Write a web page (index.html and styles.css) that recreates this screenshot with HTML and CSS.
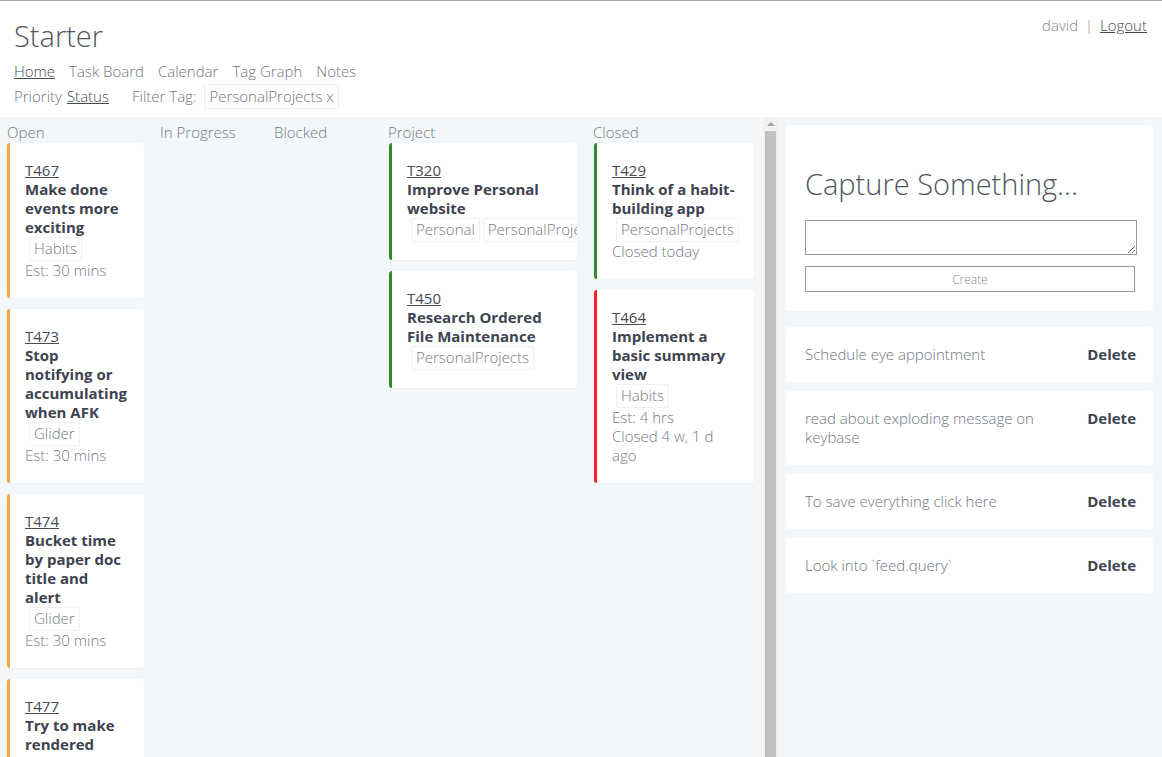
FILE: index.html
```html
<!DOCTYPE html>
<html>
<head>
<meta charset="utf-8">
<title>Starter</title>
<link rel="stylesheet" href="styles.css">
</head>
<body>
<header class="header">
  <div class="header-left">
    <h1 class="brand">Starter</h1>
    <nav class="nav">
      <a class="nav-link active" href="#">Home</a>
      <a class="nav-link" href="#">Task Board</a>
      <a class="nav-link" href="#">Calendar</a>
      <a class="nav-link" href="#">Tag Graph</a>
      <a class="nav-link" href="#">Notes</a>
    </nav>
    <div class="filters">
      <span class="sort">Priority</span>
      <a class="sort active" href="#">Status</a>
      <span class="filter-label">Filter Tag:</span>
      <span class="filter-tag">PersonalProjects x</span>
    </div>
  </div>
  <div class="user">
    <span class="user-name">david</span>
    <span class="sep">|</span>
    <a class="logout" href="#">Logout</a>
  </div>
</header>
<main class="main">
  <section class="board">
    <div class="column col-open">
      <div class="col-title">Open</div>
      <div class="card open">
        <a class="card-id" href="#">T467</a>
        <div class="card-title">Make done events more exciting</div>
        <div class="tags"><span class="tag">Habits</span></div>
        <div class="meta">Est: 30 mins</div>
      </div>
      <div class="card open">
        <a class="card-id" href="#">T473</a>
        <div class="card-title">Stop notifying or accumulating when AFK</div>
        <div class="tags"><span class="tag">Glider</span></div>
        <div class="meta">Est: 30 mins</div>
      </div>
      <div class="card open">
        <a class="card-id" href="#">T474</a>
        <div class="card-title">Bucket time by paper doc title and alert</div>
        <div class="tags"><span class="tag">Glider</span></div>
        <div class="meta">Est: 30 mins</div>
      </div>
      <div class="card open">
        <a class="card-id" href="#">T477</a>
        <div class="card-title">Try to make rendered links clickable</div>
        <div class="tags"><span class="tag">Glider</span></div>
        <div class="meta">Est: 30 mins</div>
      </div>
    </div>
    <div class="column col-progress">
      <div class="col-title">In Progress</div>
    </div>
    <div class="column col-blocked">
      <div class="col-title">Blocked</div>
    </div>
    <div class="column col-project">
      <div class="col-title">Project</div>
      <div class="card project">
        <a class="card-id" href="#">T320</a>
        <div class="card-title">Improve Personal website</div>
        <div class="tags"><span class="tag">Personal</span><span class="tag">PersonalProjects</span></div>
      </div>
      <div class="card project">
        <a class="card-id" href="#">T450</a>
        <div class="card-title">Research Ordered File Maintenance</div>
        <div class="tags"><span class="tag">PersonalProjects</span></div>
      </div>
    </div>
    <div class="column col-closed">
      <div class="col-title">Closed</div>
      <div class="card done">
        <a class="card-id" href="#">T429</a>
        <div class="card-title">Think of a habit-building app</div>
        <div class="tags"><span class="tag">PersonalProjects</span></div>
        <div class="meta">Closed today</div>
      </div>
      <div class="card late">
        <a class="card-id" href="#">T464</a>
        <div class="card-title">Implement a basic summary view</div>
        <div class="tags"><span class="tag">Habits</span></div>
        <div class="meta">Est: 4 hrs</div>
        <div class="meta">Closed 4 w, 1 d ago</div>
      </div>
    </div>
  </section>
  <div class="scrollbar" aria-hidden="true">
    <div class="scroll-up"></div>
    <div class="scroll-thumb"></div>
  </div>
  <aside class="side">
    <div class="capture">
      <h2 class="capture-title">Capture Something...</h2>
      <textarea class="capture-input"></textarea>
      <button class="capture-btn">Create</button>
    </div>
    <div class="note">
      <div class="note-text">Schedule eye appointment</div>
      <a class="note-delete" href="#">Delete</a>
    </div>
    <div class="note">
      <div class="note-text">read about exploding message on keybase</div>
      <a class="note-delete" href="#">Delete</a>
    </div>
    <div class="note">
      <div class="note-text">To save everything click here</div>
      <a class="note-delete" href="#">Delete</a>
    </div>
    <div class="note">
      <div class="note-text">Look into `feed.query`</div>
      <a class="note-delete" href="#">Delete</a>
    </div>
  </aside>
</main>
</body>
</html>
```
FILE: styles.css
```css
html, body {
  overflow: hidden;
  height: 100%;
}
body {
  margin: 0;
  border-top: 1px solid #aaaaaa;
  font-family: "Open Sans", "Liberation Sans", sans-serif;
  font-size: 15px;
  line-height: 19px;
  font-weight: 300;
  color: #6f767f;
  background: #ffffff;
}
a {
  color: inherit;
  text-decoration: none;
}

.header {
  display: flex;
  justify-content: space-between;
  padding: 16px 15px 0 14px;
  height: 100px;
}
.brand {
  margin: 0;
  font-size: 29px;
  line-height: 38px;
  font-weight: 300;
  color: #4f5660;
}
.nav {
  display: flex;
  gap: 14px;
  margin-top: 7px;
}
.nav-link.active,
.sort.active {
  text-decoration: underline;
  color: #464b53;
}
.filters {
  display: flex;
  align-items: center;
  margin-top: 3px;
}
.sort {
  margin-right: 5px;
}
.filter-label {
  margin-left: 18px;
  margin-right: 8px;
}
.filter-tag {
  border: 1px solid #eeeeee;
  border-radius: 2px;
  padding: 2px 4px;
  line-height: 19px;
}
.user {
  line-height: 16px;
}
.user-name {
  color: #80868e;
}
.sep {
  color: #b4857f;
  margin: 0 3px;
}
.logout {
  text-decoration: underline;
  color: #464b53;
}

.main {
  display: grid;
  grid-template-columns: 763px 15px 1fr;
  height: 800px;
  background: #f4f7fa;
}
.board {
  overflow: hidden;
  display: grid;
  grid-template-columns: 137px 98px 98px 189px 161px;
  column-gap: 16px;
  align-items: start;
  padding: 6px 0 10px 7px;
}
.column {
  display: flex;
  flex-direction: column;
  gap: 11px;
}
.col-project .card,
.col-closed .card {
  margin-left: 1px;
}
.col-title {
  line-height: 19px;
  margin-bottom: -10px;
  color: #737a83;
}
.card {
  background: #ffffff;
  border-left: 3px solid #f3a73b;
  border-radius: 3px;
  padding: 18px 19px 18px 15px;
  overflow: hidden;
  box-shadow: 0 1px 2px rgba(0, 0, 0, 0.03);
}
.card.project,
.card.done {
  border-left-color: #2f8c2f;
}
.card.late {
  border-left-color: #ff1f1f;
}
.card-id {
  display: block;
  text-decoration: underline;
  color: #464b53;
  font-weight: 400;
}
.card-title {
  font-weight: 700;
  color: #3d4350;
}
.tags {
  display: flex;
  gap: 3px;
  padding-left: 4px;
  white-space: nowrap;
}
.tag {
  border: 1px solid #f0f0f0;
  border-radius: 2px;
  padding: 1px 4px 2px;
  line-height: 19px;
  color: #737a83;
}
.meta {
  color: #737a83;
}

.scrollbar {
  display: flex;
  flex-direction: column;
  background: #f1f1f1;
}
.scroll-up {
  height: 14px;
  flex: none;
  display: flex;
  justify-content: center;
  align-items: center;
}
.scroll-up::before {
  content: "";
  width: 0;
  height: 0;
  border-left: 4px solid transparent;
  border-right: 4px solid transparent;
  border-bottom: 4px solid #a3a3a3;
}
.scroll-thumb {
  flex: 1;
  margin: 0 2px;
  background: #c1c1c1;
}

.side {
  padding: 8px 9px 0 8px;
  overflow: hidden;
}
.capture {
  background: #ffffff;
  border-radius: 3px;
  padding: 19px 16px 19px 19px;
}
.capture-title {
  margin: 20px 0 16px;
  font-size: 29px;
  line-height: 40px;
  font-weight: 300;
  color: #4f5660;
}
.capture-input {
  display: block;
  box-sizing: border-box;
  width: 100%;
  height: 35px;
  border: 1px solid #9a9a9a;
  margin: 0;
  padding: 2px;
  font: inherit;
}
.capture-btn {
  display: block;
  box-sizing: border-box;
  width: calc(100% - 2px);
  height: 26px;
  margin-top: 11px;
  border: 1px solid #9a9a9a;
  background: #ffffff;
  font-family: "Open Sans", "Liberation Sans", sans-serif;
  font-size: 12px;
  font-weight: 300;
  color: #8a8a8a;
}
.note {
  display: flex;
  justify-content: space-between;
  align-items: flex-start;
  gap: 40px;
  background: #ffffff;
  border-radius: 3px;
  padding: 18px 17px 18px 19px;
  margin-top: 9px;
}
.capture + .note {
  margin-top: 16px;
}
.note-text {
  flex: 1;
}
.note-delete {
  font-weight: 700;
  color: #3d4350;
}
```
